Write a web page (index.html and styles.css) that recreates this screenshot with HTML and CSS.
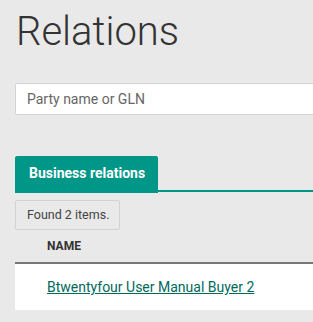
FILE: index.html
```html
<!DOCTYPE html>
<html lang="en">
<head>
    <meta charset="UTF-8">
    <meta name="viewport" content="width=device-width, initial-scale=1.0">
    <title>Relations</title>
    <link rel="stylesheet" href="styles.css">
</head>
<body>

<main class="page">
    <h1 class="title">Relations</h1>

    <input class="search" type="text" placeholder="Party name or GLN">

    <div class="tabs">
        <div class="tab active">Business relations</div>
        <div class="tab-line"></div>
    </div>

    <div class="found">Found 2 items.</div>

    <table class="grid">
        <thead>
            <tr><th>NAME</th></tr>
        </thead>
        <tbody>
            <tr><td><a href="#">Btwentyfour User Manual Buyer 2</a></td></tr>
        </tbody>
    </table>
</main>

</body>
</html>
```

FILE: styles.css
```css
body {
    margin: 0;
    padding: 0;
    background-color: #e9e9e9;
    font-family: Roboto, "Liberation Sans", sans-serif;
    color: #333;
    overflow: hidden;
}

.page {
    padding: 0 0 0 15px;
}

.title {
    margin: 0;
    padding-top: 8px;
    height: 75px;
    font-weight: 300;
    font-size: 40px;
    line-height: 48px;
    color: #333;
    padding-left: 1px;
}

.search {
    display: block;
    box-sizing: border-box;
    width: calc(100% + 4px);
    height: 32px;
    margin: 0;
    padding: 0 11px;
    border: 1px solid #d4d4d4;
    border-radius: 2px;
    background: white;
    font-family: Roboto, "Liberation Sans", sans-serif;
    font-size: 14px;
    color: #333;
}

.search::placeholder {
    color: #666;
}

.tabs {
    display: flex;
    align-items: flex-end;
    margin-top: 41px;
}

.tab {
    height: 37px;
    line-height: 34px;
    padding: 0 13px 0 14px;
    box-sizing: border-box;
    background-color: #009688;
    color: white;
    font-weight: 700;
    font-size: 14px;
    border-radius: 2px 2px 0 0;
}

.tab-line {
    flex: 1;
    height: 2px;
    margin-bottom: 1px;
    background-color: #009688;
}

.found {
    display: inline-block;
    margin-top: 7px;
    height: 30px;
    box-sizing: border-box;
    line-height: 28px;
    padding: 0 10px 0 11px;
    border: 1px solid #d2d2d2;
    border-radius: 2px;
    font-size: 12.5px;
    color: #444;
}

.grid {
    width: 100%;
    border-collapse: collapse;
}

.grid th {
    text-align: left;
    font-size: 12px;
    font-weight: 700;
    color: #333;
    height: 32px;
    padding: 0 0 0 32px;
    border-bottom: 2px solid #777;
}

.grid td {
    background: white;
    height: 46px;
    padding: 0 0 0 32px;
    font-size: 14px;
}

.grid a {
    color: #00695c;
    text-decoration: underline;
}
```
